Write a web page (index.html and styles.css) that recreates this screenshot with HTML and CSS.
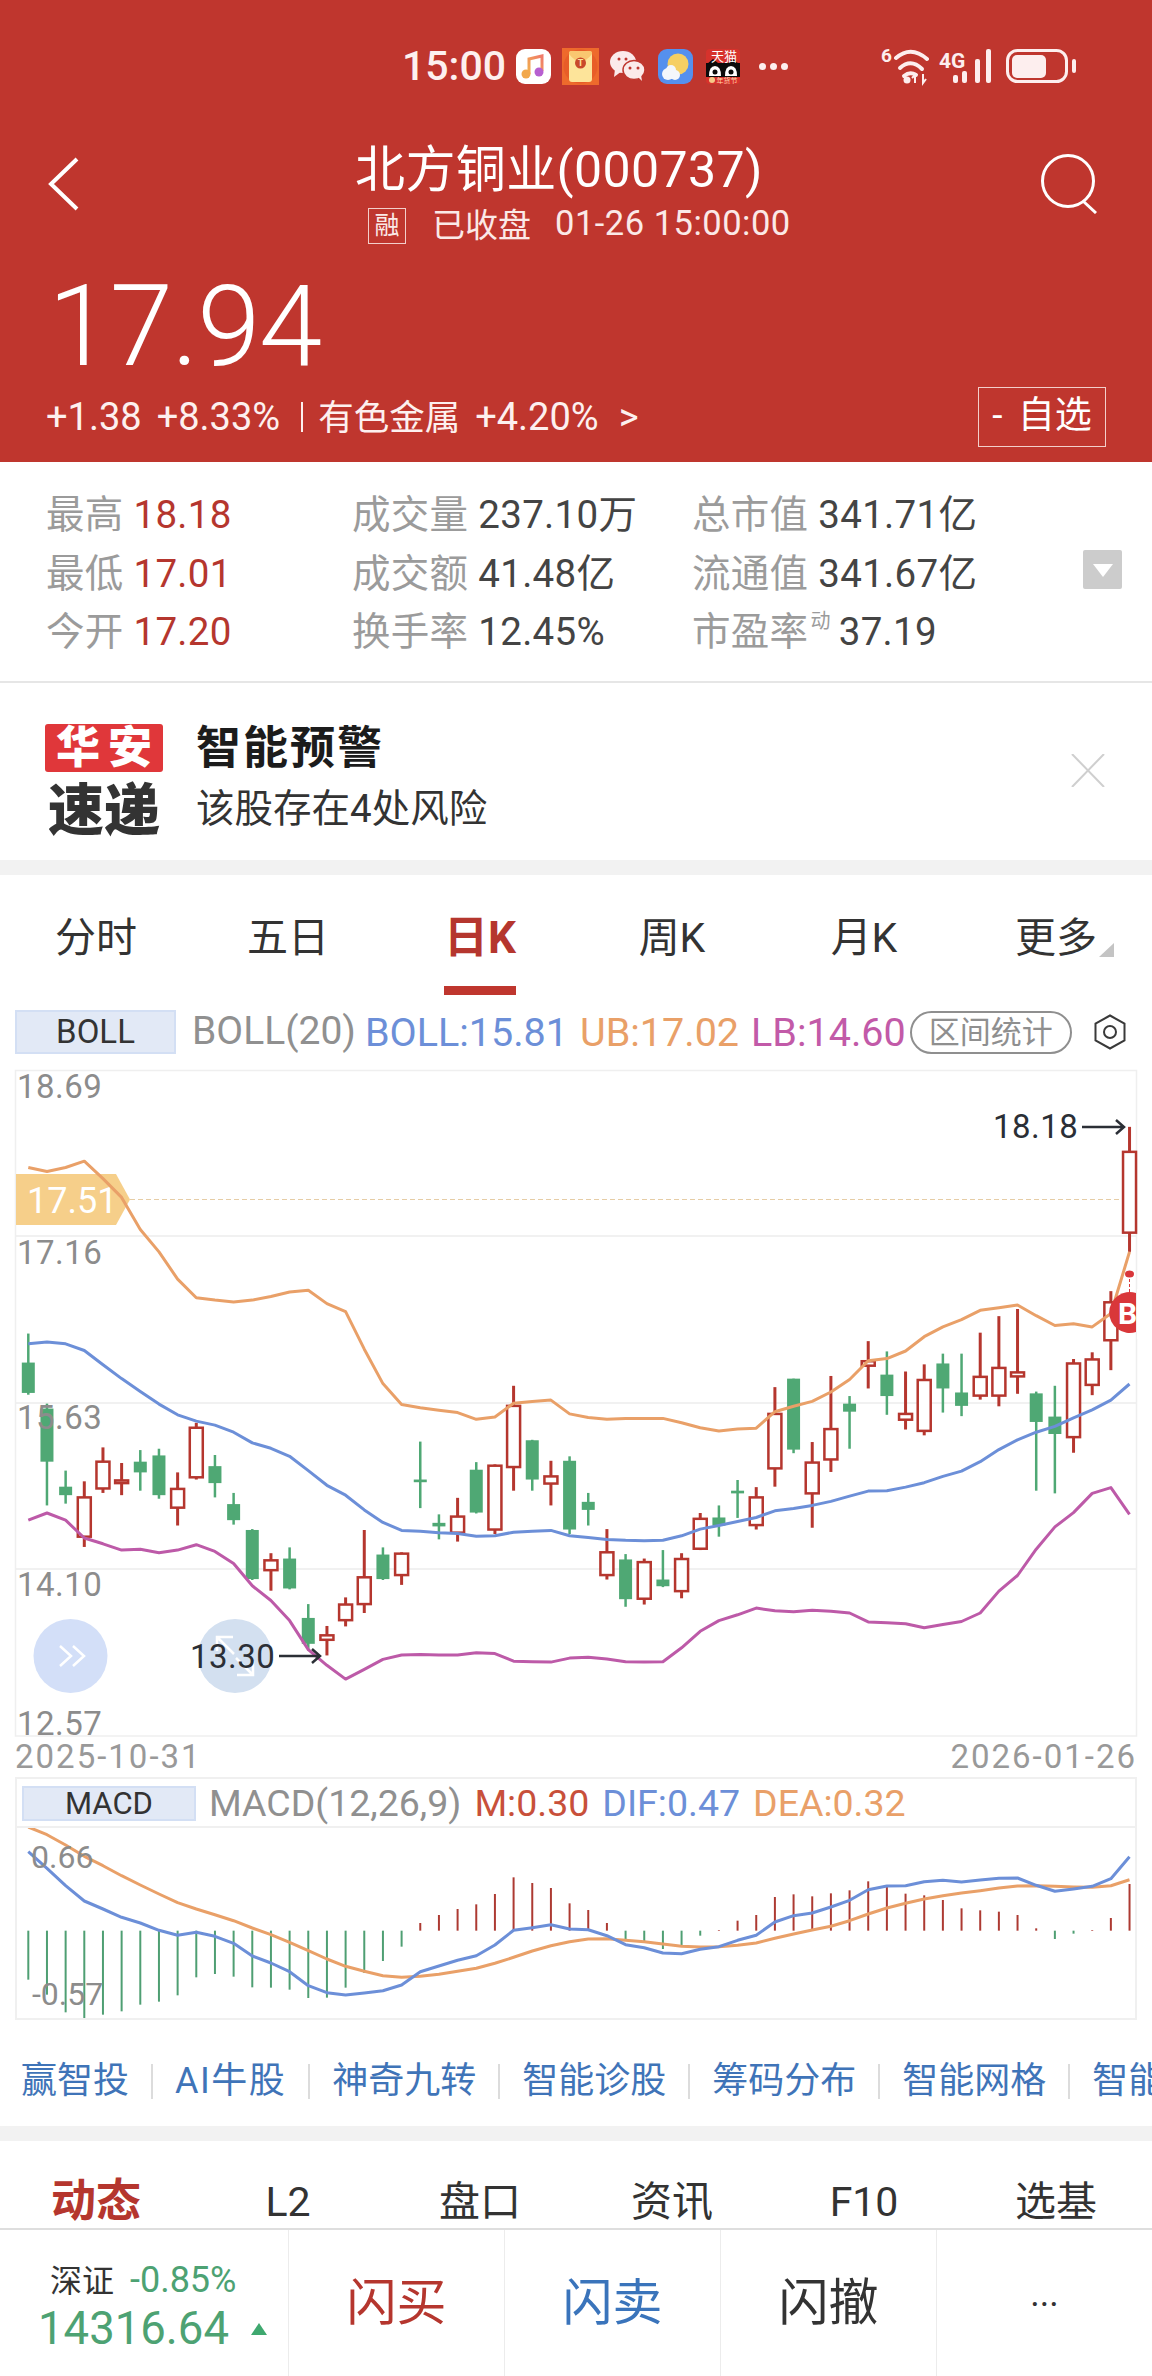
FILE: index.html
```html
<!DOCTYPE html>
<html>
<head>
<meta name="viewport" content="width=device-width, initial-scale=1">
<title>北方铜业(000737)</title>
<link rel="stylesheet" href="styles.css">
</head>
<body>
<div class="page">

<!-- Red quote header -->
<div class="quote-head">
   <div class="statusbar">
      <span class="clock">15:00</span>
      <!-- music -->
      <svg class="app-icon" viewBox="0 0 35 35">
         <defs>
            <linearGradient id="noteGrad" x1="0" y1="1" x2="1" y2="0">
               <stop offset="0" stop-color="#f2b04c"/>
               <stop offset="1" stop-color="#f07a6a"/>
            </linearGradient>
         </defs>
         <rect width="35" height="35" rx="9" fill="#fff"/>
         <path d="M13 25 V10 L26 7 V22" fill="none" stroke="url(#noteGrad)" stroke-width="3"/>
         <circle cx="10" cy="25" r="4.5" fill="#f2a84c"/>
         <circle cx="23" cy="23" r="4.5" fill="#b75fd0"/>
      </svg>
      <!-- red packet -->
      <svg class="app-icon packet" viewBox="0 0 37 37">
         <rect width="37" height="37" fill="#ee6a2c"/>
         <circle cx="18.5" cy="18.5" r="17" fill="#e85d28"/>
         <rect x="7" y="3" width="23" height="31" rx="3" fill="#fde49a"/>
         <path d="M7 6 Q18.5 21 30 6 V5 Q30 3 28 3 H9 Q7 3 7 5 Z" fill="#f9c770"/>
         <circle cx="18.5" cy="15" r="5.5" fill="#c9482a"/>
         <text class="packet-t" x="18.5" y="18">T</text>
      </svg>
      <!-- wechat -->
      <svg class="app-icon wechat" viewBox="0 0 35 30">
         <ellipse cx="13" cy="11" rx="13" ry="11" fill="#fbeaea"/>
         <path d="M5 18 L4 26 L12 20 Z" fill="#fbeaea"/>
         <ellipse cx="24" cy="19" rx="11" ry="9.5" fill="#fbeaea" stroke="#bf362e" stroke-width="1.5"/>
         <path d="M28 26 L32 30 L31 24 Z" fill="#fbeaea"/>
         <circle cx="9" cy="8" r="1.5" fill="#bf362e"/>
         <circle cx="16" cy="8" r="1.5" fill="#bf362e"/>
         <circle cx="20" cy="17" r="1.5" fill="#bf362e"/>
         <circle cx="28" cy="17" r="1.5" fill="#bf362e"/>
      </svg>
      <!-- weather -->
      <svg class="app-icon weather" viewBox="0 0 35 35">
         <rect width="35" height="35" rx="9" fill="#5590ee"/>
         <circle cx="20" cy="15" r="10.5" fill="#f6cf63"/>
         <circle cx="10" cy="25" r="6" fill="#f4f7fb"/>
         <circle cx="17" cy="26" r="5" fill="#f4f7fb"/>
         <circle cx="13" cy="21" r="5" fill="#f4f7fb"/>
      </svg>
      <!-- tmall -->
      <svg class="app-icon tmall" viewBox="0 0 34 35">
         <rect width="34" height="35" rx="4" fill="#d7322c"/>
         <rect y="14" width="34" height="14" fill="#0b0b0b"/>
         <path d="M1 15 L7 10 L12 14 H22 L27 10 L33 15 Z" fill="#0b0b0b"/>
         <path d="M3 27 Q3 17 9 17 Q15 17 15 27 Z M19 27 Q19 17 25 17 Q31 17 31 27 Z" fill="#fff"/>
         <circle cx="9" cy="23" r="2.5" fill="#0b0b0b"/>
         <circle cx="25" cy="23" r="2.5" fill="#0b0b0b"/>
         <text class="tmall-name" x="18" y="11.5">天猫</text>
         <circle cx="6" cy="31" r="3" fill="#f6c987"/>
         <text class="tmall-sub" x="21" y="33.5">年货节</text>
      </svg>
      <span class="status-dots"><i></i><i></i><i></i></span>
      <!-- wifi, signal, battery -->
      <svg class="status-right" viewBox="880 45 196 42">
         <text class="net-six" x="880" y="62">6</text>
         <g fill="none" stroke="#fdeeee" stroke-width="4" stroke-linecap="round">
            <path d="M895 58 Q910 45 926 59"/>
            <path d="M899 68 Q910 58 921 69"/>
            <path d="M903 76 Q909 71 915 75"/>
         </g>
         <circle cx="906" cy="80" r="3.5" fill="#fdeeee"/>
         <path d="M914 83 V75 L911 78 M922 74 V83 L925 79" fill="none" stroke="#fdeeee" stroke-width="2"/>
         <text class="net-text" x="938" y="68">4G</text>
         <g fill="#fdeeee">
            <rect x="952" y="75" width="5" height="8" rx="2"/>
            <rect x="961" y="71" width="5" height="12" rx="2"/>
            <rect x="974" y="59" width="5" height="24" rx="2"/>
            <rect x="985" y="49" width="5" height="34" rx="2"/>
         </g>
         <rect x="1006.5" y="50.5" width="59" height="31" rx="10" fill="none" stroke="#fdeeee" stroke-width="3"/>
         <rect x="1011" y="55" width="34" height="23" rx="5" fill="#fdeeee"/>
         <rect x="1071" y="59" width="4" height="14" rx="2" fill="#fdeeee"/>
      </svg>
   </div>

   <div class="navbar">
      <svg class="nav-back" viewBox="0 0 31 54">
         <path d="M29 2 L3 27 L29 52" fill="none" stroke="#fff" stroke-width="4"/>
      </svg>
      <div class="nav-title">
         <div class="stock-name">北方铜业(000737)</div>
         <div class="stock-sub">
            <span class="rong">融</span>
            <span class="market-state">已收盘</span>
            <span class="sub-time">01-26 15:00:00</span>
         </div>
      </div>
      <svg class="nav-search" viewBox="0 0 60 60">
         <circle cx="28" cy="27" r="25.5" fill="none" stroke="#fff" stroke-width="3"/>
         <path d="M43 47 L56 59" fill="none" stroke="#fff" stroke-width="3"/>
      </svg>
   </div>

   <div class="price">17.94</div>
   <div class="change-row">
      <div class="change-text">
         <span>+1.38</span>
         <span class="ml15">+8.33%</span>
         <span class="pipe"></span>
         <span class="sector">有色金属</span>
         <span class="ml15">+4.20%</span>
         <span class="chevron">&gt;</span>
      </div>
      <div class="watch-btn">- 自选</div>
   </div>
</div>

<!-- Stats table, filled column by column -->
<div class="stats">
   <div class="stat"><span class="stat-name">最高</span> <span class="up">18.18</span></div>
   <div class="stat"><span class="stat-name">最低</span> <span class="up">17.01</span></div>
   <div class="stat"><span class="stat-name">今开</span> <span class="up">17.20</span></div>
   <div class="stat"><span class="stat-name">成交量</span> 237.10万</div>
   <div class="stat"><span class="stat-name">成交额</span> 41.48亿</div>
   <div class="stat"><span class="stat-name">换手率</span> 12.45%</div>
   <div class="stat"><span class="stat-name">总市值</span> 341.71亿</div>
   <div class="stat"><span class="stat-name">流通值</span> 341.67亿</div>
   <div class="stat"><span class="stat-name">市盈率<sup class="dyn">动</sup></span>37.19</div>
   <div class="stats-toggle"></div>
</div>

<!-- Alert card -->
<div class="alert">
   <div class="alert-logo">
      <div class="logo-top">华安</div>
      <div class="logo-bottom">速递</div>
   </div>
   <div class="alert-text">
      <div class="alert-title">智能预警</div>
      <div class="alert-desc">该股存在4处风险</div>
   </div>
   <svg class="alert-close" viewBox="0 0 34 33">
      <path d="M1 0 L33 33 M33 0 L1 33" stroke="#cfcfcf" stroke-width="2"/>
   </svg>
</div>
<div class="band"></div>

<!-- Period tabs -->
<div class="period-tabs">
   <div class="period-tab">分时</div>
   <div class="period-tab">五日</div>
   <div class="period-tab active">日K<div class="tab-line"></div></div>
   <div class="period-tab">周K</div>
   <div class="period-tab">月K</div>
   <div class="period-tab"><span class="more">更多</span></div>
</div>

<!-- Indicator legend -->
<div class="legend">
   <div class="chip">BOLL</div>
   <span class="gray">BOLL(20)</span>
   <span class="blue">BOLL:15.81</span>
   <span class="orange">UB:17.02</span>
   <span class="purple">LB:14.60</span>
   <div class="stat-pill">区间统计</div>
   <svg class="hex-icon" viewBox="0 0 32 36">
      <path d="M16 1.5 L30.5 9.5 V26.5 L16 34.5 L1.5 26.5 V9.5 Z" fill="none" stroke="#3a3a3a" stroke-width="2"/>
      <circle cx="16" cy="18" r="6" fill="none" stroke="#3a3a3a" stroke-width="2"/>
   </svg>
</div>

<!-- K line chart -->
<svg class="kline" id="kline" viewBox="0 1060 1152 718"></svg>

<!-- MACD panel -->
<div class="macd">
   <div class="macd-head">
      <div class="chip chip-macd">MACD</div>
      <span class="gray">MACD(12,26,9)</span>
      <span class="red">M:0.30</span>
      <span class="blue">DIF:0.47</span>
      <span class="orange">DEA:0.32</span>
   </div>
   <svg class="macd-chart" id="macd" viewBox="17 1829 1118 190"></svg>
</div>

<!-- Feature links -->
<div class="features">
   <span class="feature">赢智投</span>
   <span class="feature feature-ai">AI牛股</span>
   <span class="feature">神奇九转</span>
   <span class="feature">智能诊股</span>
   <span class="feature">筹码分布</span>
   <span class="feature">智能网格</span>
   <span class="feature">智能</span>
</div>
<div class="band"></div>

<!-- Content tabs -->
<div class="info-tabs">
   <div class="info-tab active">动态</div>
   <div class="info-tab">L2</div>
   <div class="info-tab">盘口</div>
   <div class="info-tab">资讯</div>
   <div class="info-tab">F10</div>
   <div class="info-tab">选基</div>
</div>

<!-- Bottom trade bar -->
<div class="tradebar">
   <div class="index-cell">
      <div class="index-top"><span class="index-name">深证</span> <span class="index-pct">-0.85%</span></div>
      <div class="index-value">14316.64<span class="index-arrow"></span></div>
   </div>
   <div class="trade-btn buy">闪买</div>
   <div class="trade-btn sell">闪卖</div>
   <div class="trade-btn">闪撤</div>
   <div class="trade-btn"><span class="trade-more">...</span></div>
</div>

</div>

<script>
const SVGNS = 'http://www.w3.org/2000/svg';
const STEP = 18.665;

// [high, bodyTop, bodyBottom, low, up?] read off the chart, converted by kY below
const candles = [
   [615,680,748,752,0],[772,783,902,1000,0],[922,958,977,996,0],[946,982,1070,1093,1],[870,902,962,972,1],
   [905,944,950,977,1],[876,902,926,967,0],[873,888,977,985,0],[926,963,1005,1045,1],[815,826,937,942,1],
   [887,912,950,982,0],[972,997,1033,1043,0],[1053,1055,1165,1167,0],[1107,1123,1145,1191,1],[1094,1119,1186,1188,0],
   [1221,1252,1310,1325,0],[1270,1291,1301,1336,1],[1206,1222,1257,1271,1],[1055,1161,1221,1241,1],[1094,1110,1165,1167,0],
   [1105,1108,1156,1178,1],[857,942,948,1006,0],[1020,1039,1047,1076,0],[983,1025,1061,1081,1],[903,920,1016,1018,0],
   [908,911,1054,1064,1],[732,777,914,967,1],[853,854,942,967,0],[900,935,951,1000,1],[890,900,1054,1064,0],
   [972,992,1010,1045,0],[1053,1105,1156,1166,1],[1109,1121,1210,1227,0],[1119,1127,1209,1222,1],[1100,1166,1181,1183,0],
   [1107,1120,1192,1208,1],[1017,1030,1097,1100,1],[1000,1027,1045,1070,0],[943,967,973,1028,0],[959,982,1044,1054,1],
   [735,795,917,958,1],[716,716,875,883,0],[858,904,973,1050,1],[710,829,897,925,1],[755,772,790,873,0],
   [632,677,687,738,1],[655,707,755,797,0],[700,795,808,830,1],[684,719,833,843,1],[660,682,738,792,0],
   [660,747,777,800,0],[613,712,754,763,1],[576,692,754,778,1],[560,702,711,750,1],[745,749,813,967,0],
   [732,801,840,973,0],[672,682,847,882,1],[657,673,730,753,1],[520,545,630,697,1],[152,208,389,432,1]
];
const ub = [243,252,243,229,268,310,382,432,493,535,540,544,540,532,522,518,548,566,650,727,774,781,787,792,807,802,771,767,764,795,803,807,805,805,805,815,826,833,829,827,790,778,767,746,718,676,671,654,622,600,584,563,557,551,575,597,593,600,570,432];
const boll = [638,634,638,653,685,716,745,773,797,811,820,836,860,872,890,922,955,977,1010,1038,1056,1058,1061,1063,1069,1068,1060,1058,1056,1068,1072,1076,1078,1079,1078,1068,1053,1045,1036,1027,1012,1007,1000,991,979,968,967,959,949,935,923,902,875,853,836,823,804,786,764,728];
const lb = [1033,1017,1033,1073,1086,1100,1098,1106,1100,1088,1103,1130,1180,1213,1258,1323,1358,1389,1367,1345,1335,1334,1335,1335,1330,1332,1349,1350,1351,1342,1340,1344,1350,1351,1350,1319,1282,1258,1245,1230,1236,1238,1235,1237,1241,1261,1263,1265,1274,1267,1260,1241,1192,1157,1098,1048,1016,973,960,1020];

const dif = [248,298,350,396,420,445,462,484,499,490,502,523,561,582,608,650,671,678,672,665,648,608,591,574,560,528,484,476,467,480,482,500,527,536,552,554,541,533,514,499,459,440,432,414,394,362,351,350,338,334,339,333,328,327,349,367,360,352,329,263];
const dea = [174,197,228,262,290,320,348,375,401,420,437,455,477,497,520,545,570,592,607,620,625,622,616,607,598,583,565,546,530,518,510,509,514,518,525,532,534,533,529,522,508,495,483,472,455,435,417,403,390,380,372,365,357,351,350,352,354,355,350,332];
const bars = [632,677,730,752,737,727,707,698,679,625,615,623,655,656,662,687,686,656,612,576,533,462,438,420,406,375,325,342,357,403,423,462,510,522,540,528,500,483,455,438,384,376,382,373,364,337,353,374,379,393,418,424,428,438,478,510,494,483,447,345];

function kX(i) { return 28.3 + STEP * i; }
function kY(v) { return 1060 + v / 2.24; }
function mY(v) { return 1770 + v / 3; }

function add(parent, tag, attrs, text) {
   const el = document.createElementNS(SVGNS, tag);
   for (const k in attrs) el.setAttribute(k, attrs[k]);
   if (text) el.textContent = text;
   parent.appendChild(el);
   return el;
}

function polyline(parent, values, toY, color, width) {
   const pts = values.map((v, i) => kX(i).toFixed(1) + ',' + toY(v).toFixed(1)).join(' ');
   add(parent, 'polyline', { points: pts, fill: 'none', stroke: color, 'stroke-width': width, 'stroke-linejoin': 'round' });
}

function drawKline() {
   const svg = document.getElementById('kline');

   // Frame and grid
   add(svg, 'rect', { x: 15.5, y: 1071.5, width: 1121, height: 665.5, fill: 'none', stroke: '#efefef', 'stroke-width': 1.5 });
   [1237, 1404, 1570].forEach(y => add(svg, 'line', { x1: 16, x2: 1136, y1: y, y2: y, stroke: '#ececec', 'stroke-width': 1.5 }));

   // Last close dashed line and tag
   add(svg, 'line', { x1: 130, x2: 1136, y1: 1200.5, y2: 1200.5, stroke: '#e6cda6', 'stroke-width': 1, 'stroke-dasharray': '5 3' });
   add(svg, 'path', { d: 'M16 1175 H116 L130 1200.5 L116 1226 H16 Z', fill: '#f6cf8a' });
   add(svg, 'text', { class: 'tag-text', x: 27, y: 1214 }, '17.51');

   // Candles
   candles.forEach((c, i) => {
      const x = kX(i);
      const color = c[4] ? '#b5362e' : '#4fa874';
      add(svg, 'line', { x1: x, x2: x, y1: kY(c[0]), y2: kY(c[3]), stroke: color, 'stroke-width': c[4] ? 3 : 2.5 });
      if (c[4]) {
         add(svg, 'rect', { x: x - 6.5, y: kY(c[1]), width: 13, height: Math.max(kY(c[2]) - kY(c[1]), 2), fill: '#fff', stroke: color, 'stroke-width': 2.5 });
      } else {
         add(svg, 'rect', { x: x - 6.5, y: kY(c[1]), width: 13, height: kY(c[2]) - kY(c[1]), fill: color });
      }
   });

   // Bollinger lines
   polyline(svg, ub, kY, '#e9a068', 3);
   polyline(svg, boll, kY, '#6c8fd8', 3);
   polyline(svg, lb, kY, '#bd5aa8', 3);

   // Floating round buttons
   add(svg, 'circle', { cx: 70.5, cy: 1657, r: 37, fill: '#d3dff8' });
   add(svg, 'path', { d: 'M60 1647 L71 1657 L60 1667 M73 1647 L84 1657 L73 1667', fill: 'none', stroke: '#fff', 'stroke-width': 2.5 });
   add(svg, 'circle', { cx: 235, cy: 1657, r: 37, fill: '#d3e0f0' });
   add(svg, 'path', { d: 'M233 1638 H217 V1652 M217 1638 L234 1655 M237 1676 H253 V1662 M253 1676 L236 1659', fill: 'none', stroke: '#fff', 'stroke-width': 2.5 });

   // Axis labels
   [[1099, '18.69'], [1265, '17.16'], [1430, '15.63'], [1597, '14.10'], [1736, '12.57']].forEach(a => {
      add(svg, 'text', { class: 'axis-label', x: 17, y: a[0] }, a[1]);
   });
   add(svg, 'text', { class: 'axis-label axis-date', x: 15, y: 1769 }, '2025-10-31');
   add(svg, 'text', { class: 'axis-label axis-date label-end', x: 1137, y: 1769 }, '2026-01-26');

   // High and low marks
   add(svg, 'text', { class: 'mark-label', x: 190, y: 1669 }, '13.30');
   add(svg, 'path', { d: 'M279 1657 H320 M312 1650 L320 1657 L312 1664', fill: 'none', stroke: '#2b2f36', 'stroke-width': 2.5 });
   add(svg, 'text', { class: 'mark-label', x: 993, y: 1139 }, '18.18');
   add(svg, 'path', { d: 'M1082 1128 H1124 M1116 1121 L1124 1128 L1116 1135', fill: 'none', stroke: '#2b2f36', 'stroke-width': 2.5 });

   // Buy marker, cut off by the frame on the right
   add(svg, 'line', { x1: 1129.5, x2: 1129.5, y1: 1275, y2: 1295, stroke: '#d9373a', 'stroke-width': 1, 'stroke-dasharray': '3 2' });
   add(svg, 'ellipse', { cx: 1129.5, cy: 1275, rx: 4.5, ry: 3.5, fill: '#d9373a' });
   add(svg, 'path', { d: 'M1136 1294 A20.5 20.5 0 1 0 1136 1333 Z', fill: '#d9373a' });
   add(svg, 'text', { class: 'buy-mark', x: 1118, y: 1325 }, 'B');
   add(svg, 'rect', { x: 1137, y: 1290, width: 15, height: 50, fill: '#fff' });
}

function drawMacd() {
   const svg = document.getElementById('macd');
   bars.forEach((v, i) => {
      const color = (i <= 20 || (i >= 32 && i <= 36) || i === 55 || i === 56) ? '#4f9f73' : '#ad3a32';
      add(svg, 'line', { x1: kX(i), x2: kX(i), y1: mY(485), y2: mY(v), stroke: color, 'stroke-width': 2 });
   });
   polyline(svg, dea, mY, '#e9a068', 3);
   polyline(svg, dif, mY, '#6c8fd8', 3);
   add(svg, 'text', { class: 'macd-label', x: 31, y: 1869 }, '0.66');
   add(svg, 'text', { class: 'macd-label', x: 32, y: 2006 }, '-0.57');
}

drawKline();
drawMacd();
</script>
</body>
</html>
```

FILE: styles.css
```css
html,
body {
   margin: 0;
   padding: 0;
   background: #fff;
   font-family: Roboto, "Noto Sans CJK SC", sans-serif;
   color: #333;
}

.page {
   width: 1152px;
   height: 2376px;
   overflow: hidden;
}

/* Header */
.quote-head {
   height: 462px;
   background-color: #bf362e;
   color: #fff;
}

.statusbar {
   display: flex;
   align-items: center;
   gap: 11px;
   height: 44px;
   padding: 44px 0 42px 402px;
}

.clock {
   width: 103px;
   font-size: 41px;
   font-weight: 500;
   line-height: 44px;
   color: #fdf0ef;
}

.app-icon {
   display: block;
   width: 35px;
   height: 35px;
}

.packet {
   width: 37px;
   height: 37px;
}

.packet-t {
   font-size: 9px;
   font-weight: 700;
   fill: #fde49a;
   text-anchor: middle;
}

.wechat {
   height: 30px;
}

.weather {
   margin-left: 2px;
}

.tmall {
   width: 34px;
   margin-left: 2px;
}

.tmall-name {
   font-size: 13px;
   fill: #fff;
   text-anchor: middle;
}

.tmall-sub {
   font-size: 7px;
   fill: #ffd9b0;
   text-anchor: middle;
}

.status-dots {
   display: flex;
   gap: 4px;
   margin-left: 8px;
}

.status-dots i {
   display: block;
   width: 7px;
   height: 7px;
   border-radius: 50%;
   background: #fdeeee;
}

.status-right {
   display: block;
   width: 196px;
   height: 42px;
   margin-left: 82px;
}

.net-six {
   font-size: 19px;
   font-weight: 700;
   fill: #fdeeee;
}

.net-text {
   font-size: 21px;
   font-weight: 700;
   fill: #fdeeee;
}

.navbar {
   display: flex;
   height: 115px;
   padding: 0 52px 0 48px;
}

.nav-back {
   display: block;
   width: 31px;
   height: 54px;
   margin-top: 27px;
}

.nav-title {
   margin-left: 276px;
}

.stock-name {
   font-size: 50px;
   line-height: 56px;
   margin-top: 12px;
   letter-spacing: 0.4px;
   white-space: nowrap;
}

.stock-sub {
   display: flex;
   align-items: center;
   margin: 10px 0 0 13px;
   height: 36px;
   font-size: 33px;
   color: #fbe9e7;
   white-space: nowrap;
}

.rong {
   width: 36px;
   height: 34px;
   border: 1px solid #f3cfcb;
   font-size: 25px;
   line-height: 34px;
   text-align: center;
}

.market-state {
   margin: 0 24px 6px 26px;
}

.sub-time {
   margin-bottom: 6px;
   font-size: 34.5px;
   letter-spacing: 0.5px;
}

.nav-search {
   display: block;
   width: 60px;
   height: 60px;
   margin: 24px 0 0 auto;
}

.price {
   margin: 26px 0 0 48px;
   font-size: 114px;
   font-weight: 300;
   line-height: 110px;
   letter-spacing: -1.5px;
}

.change-row {
   display: flex;
   justify-content: space-between;
   align-items: center;
   height: 60px;
   margin-top: 6px;
   padding: 0 46px;
}

.change-text {
   display: flex;
   align-items: center;
   font-size: 38px;
   white-space: nowrap;
   color: #fdf0ef;
}

.sector {
   margin-bottom: 6px;
   font-size: 35.5px;
}

.ml15 {
   margin-left: 15px;
}

.pipe {
   width: 2px;
   height: 30px;
   margin: 0 15px 0 21px;
   background: #fdf0ef;
}

.chevron {
   margin-left: 20px;
}

.watch-btn {
   width: 126px;
   height: 58px;
   border: 1px solid #f3cfcb;
   font-size: 37px;
   line-height: 56px;
   text-align: center;
   word-spacing: 6px;
}

/* Stats */
.stats {
   display: grid;
   grid-auto-flow: column;
   grid-template-columns: 306px 340px 391px 39px;
   grid-template-rows: repeat(3, 58.5px);
   align-items: center;
   height: 199px;
   padding: 20px 0 0 46px;
   border-bottom: 2px solid #e6e6e6;
   font-size: 38.5px;
   letter-spacing: 0.3px;
   color: #444;
   white-space: nowrap;
}

.stat-name {
   color: #9b9b9b;
}

.up {
   color: #b5362e;
}

.dyn {
   font-size: 20px;
   line-height: 0;
   margin-left: 2px;
   margin-right: 8px;
   vertical-align: 17px;
}

.stats-toggle {
   position: relative;
   grid-column: 4;
   grid-row: 2;
   height: 39px;
   border-radius: 2px;
   background: #cccccc;
}

.stats-toggle::after {
   content: "";
   position: absolute;
   left: 10px;
   top: 14px;
   border-left: 10px solid transparent;
   border-right: 10px solid transparent;
   border-top: 13px solid #fff;
}

/* Alert */
.alert {
   display: flex;
   align-items: flex-start;
   height: 177px;
   padding-left: 45px;
   box-sizing: border-box;
}

.alert-logo {
   width: 118px;
   margin-top: 41px;
}

.logo-top {
   height: 48px;
   border-radius: 3px;
   background: #e0373a;
   color: #fff;
   font-size: 44px;
   font-weight: 900;
   line-height: 48px;
   text-align: center;
   letter-spacing: 8px;
   text-indent: 8px;
   white-space: nowrap;
}

.logo-bottom {
   margin-top: 14px;
   font-size: 56px;
   font-weight: 900;
   line-height: 50px;
   color: #333;
   text-align: center;
   white-space: nowrap;
}

.alert-text {
   margin: 40px 0 0 33px;
}

.alert-title {
   font-size: 45px;
   font-weight: 700;
   line-height: 52px;
   letter-spacing: 2px;
   color: #1c1c1c;
}

.alert-desc {
   margin-top: 11px;
   font-size: 38.5px;
   line-height: 46px;
   color: #333;
}

.alert-close {
   display: block;
   width: 34px;
   height: 33px;
   margin: 71px 0 0 auto;
   margin-right: 47px;
}

.band {
   height: 15px;
   background: #f2f2f2;
}

/* Period tabs */
.period-tabs {
   display: grid;
   grid-template-columns: repeat(6, 192px);
   height: 120px;
   font-size: 41px;
   line-height: 48px;
   text-align: center;
   color: #333;
}

.period-tab {
   display: flex;
   flex-direction: column;
   align-items: center;
   padding-top: 39px;
}

.period-tab.active {
   color: #b5362e;
   font-size: 44px;
   font-weight: 700;
}

.tab-line {
   width: 72px;
   height: 9px;
   margin-top: 24px;
   background: #bf362e;
}

.more {
   position: relative;
}

.more::after {
   content: "";
   position: absolute;
   left: 100%;
   top: 29px;
   margin-left: 2px;
   border-left: 15px solid transparent;
   border-bottom: 14px solid #c4c4c4;
}

/* Legend rows */
.legend {
   display: flex;
   align-items: center;
   height: 44px;
   padding: 15px 0 0 15px;
   font-size: 39.5px;
   white-space: nowrap;
}

.chip {
   width: 157px;
   height: 40px;
   border: 2px solid #d3dff4;
   background: #e2e9f6;
   color: #333;
   font-size: 33px;
   line-height: 40px;
   text-align: center;
}

.legend .gray {
   margin-left: 16px;
   margin-bottom: 2px;
   font-size: 39px;
}

.legend .blue {
   margin-left: 9px;
}

.legend .orange,
.legend .purple {
   margin-left: 12px;
}

.gray {
   color: #909090;
}

.blue {
   color: #6c8fd8;
}

.orange {
   color: #e9a068;
}

.purple {
   color: #c25aa8;
}

.red {
   color: #c8503a;
}

.stat-pill {
   flex: none;
   width: 158px;
   height: 39px;
   margin-left: 4px;
   border: 2px solid #8f8f8f;
   border-radius: 22px;
   color: #8f8f8f;
   font-size: 31px;
   line-height: 39px;
   text-align: center;
}

.hex-icon {
   display: block;
   width: 32px;
   height: 36px;
   margin-left: 22px;
}

/* Charts */
.kline {
   display: block;
   width: 1152px;
   height: 718px;
   margin-top: 5px;
}

.axis-label {
   font-size: 33px;
   fill: #8c8c8c;
   letter-spacing: 0.5px;
}

.axis-date {
   fill: #999;
   letter-spacing: 2px;
}

.label-end {
   text-anchor: end;
}

.tag-text {
   font-size: 36px;
   fill: #fff;
}

.mark-label {
   font-size: 33px;
   fill: #2b2f36;
   letter-spacing: 0.5px;
}

.buy-mark {
   font-size: 30px;
   font-weight: 700;
   fill: #fff;
}

.macd {
   width: 1118px;
   height: 239px;
   margin-left: 15px;
   border: 2px solid #f0f0f0;
}

.macd-head {
   display: flex;
   align-items: center;
   height: 47px;
   padding-left: 5px;
   border-bottom: 2px solid #f0f0f0;
   font-size: 37.5px;
   white-space: nowrap;
}

.macd-head span {
   margin-left: 13px;
}

.chip-macd {
   width: 170px;
   height: 31px;
   font-size: 31px;
   line-height: 31px;
   margin-top: 2px;
}

.macd-chart {
   display: block;
   width: 1118px;
   height: 190px;
}

.macd-label {
   font-size: 32px;
   fill: #8c8c8c;
}

/* Feature links */
.features {
   display: flex;
   align-items: center;
   height: 90px;
   padding: 16px 0 0 21px;
   font-size: 36px;
   color: #3f74b8;
   white-space: nowrap;
}

.feature {
   height: 35px;
   line-height: 35px;
   padding-right: 22px;
   margin-right: 22px;
   border-right: 2px solid #dcdcdc;
}

.feature-ai {
   letter-spacing: 1.5px;
}

.feature:last-child {
   border-right: none;
}

/* Content tabs */
.info-tabs {
   display: grid;
   grid-template-columns: repeat(6, 192px);
   height: 87px;
   border-bottom: 2px solid #dedede;
   font-size: 41px;
   text-align: center;
   color: #333;
}

.info-tab {
   height: 87px;
   line-height: 122px;
}

.info-tab.active {
   color: #b5362e;
   font-size: 45px;
   font-weight: 700;
}

/* Trade bar */
.tradebar {
   display: grid;
   grid-template-columns: 288px repeat(4, 216px);
   height: 145px;
}

.index-cell {
   padding: 30px 0 0 50px;
   color: #4da273;
}

.index-top {
   font-size: 32px;
   line-height: 40px;
   white-space: nowrap;
}

.index-pct {
   font-size: 36px;
}

.index-name {
   color: #333;
   margin-right: 8px;
}

.index-value {
   display: flex;
   align-items: center;
   margin: 3px 0 0 -12px;
   font-size: 45.5px;
   line-height: 50px;
}

.index-arrow {
   margin-left: 22px;
   border-left: 8px solid transparent;
   border-right: 8px solid transparent;
   border-bottom: 12px solid #3fa86f;
}

.trade-btn {
   border-left: 1px solid #ececec;
   font-size: 50px;
   line-height: 147px;
   text-align: center;
   color: #333;
}

.trade-btn.buy {
   color: #b5362e;
}

.trade-btn.sell {
   color: #3a74bb;
}

.trade-more {
   position: relative;
   top: -14px;
   font-size: 36px;
}
```
